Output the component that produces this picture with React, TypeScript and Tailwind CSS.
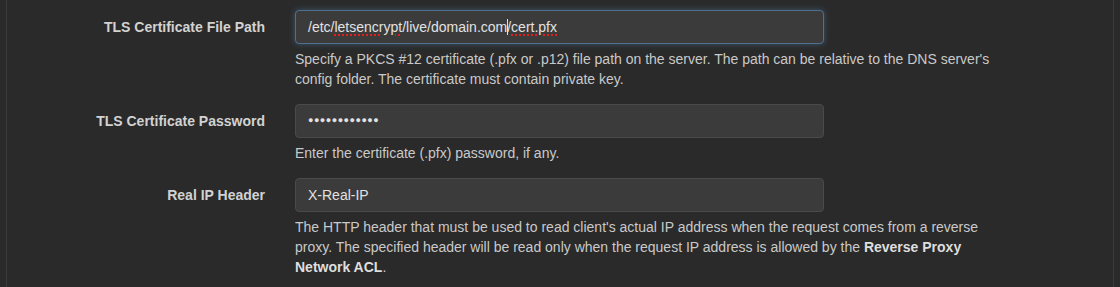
import React from "react";

const FONT = { fontFamily: '"Liberation Sans", Arial, sans-serif' };

function FormRow({
  label,
  children,
  help,
}: {
  label: string;
  children: React.ReactNode;
  help: React.ReactNode;
}) {
  return (
    <div className="flex">
      <label className="w-[258px] shrink-0 text-right font-bold text-[14px] leading-[20px] text-[#d2d2d2] pt-[7px]">
        {label}
      </label>
      <div className="ml-[30px]">
        {children}
        <p className="w-[706px] mt-[5px] text-[14px] leading-[20px] text-[#c9c9c9]">
          {help}
        </p>
      </div>
    </div>
  );
}

function Field({
  focused,
  children,
}: {
  focused?: boolean;
  children: React.ReactNode;
}) {
  return (
    <div
      className={
        "w-[529px] h-[34px] rounded-[4px] border bg-[#3b3b3b] px-[12px] flex items-center text-[14px] text-[#e2e2e2] " +
        (focused
          ? "border-[#4f6f8c] shadow-[0_0_6px_rgba(102,175,233,0.35)]"
          : "border-[#4a4a4a]")
      }
    >
      {children}
    </div>
  );
}

const squiggle =
  "underline decoration-dotted decoration-[#e0201e] decoration-[2px] underline-offset-[3px]";

export default function App() {
  return (
    <div style={FONT} className="h-[287px] overflow-hidden bg-[#2a2a2a]">
      <div className="mx-[6px] h-full border-x border-[#3c3c3c] pt-[10px]">
        <FormRow
          label="TLS Certificate File Path"
          help={
            <>
              Specify a PKCS #12 certificate (.pfx or .p12) file path on the
              server. The path can be relative to the DNS server's config
              folder. The certificate must contain private key.
            </>
          }
        >
          <Field focused>
            <span className="whitespace-pre">
              /etc/<span className={squiggle}>letsencrypt</span>/live/domain.com
              <span className="inline-block w-px h-[16px] bg-[#e2e2e2] align-[-3px] mr-[-1px]" />
              /<span className={squiggle}>cert.pfx</span>
            </span>
          </Field>
        </FormRow>

        <div className="h-[15px]" />

        <FormRow
          label="TLS Certificate Password"
          help={<>Enter the certificate (.pfx) password, if any.</>}
        >
          <Field>
            <span className="text-[9px] tracking-[0.5px]">●●●●●●●●●●●●</span>
          </Field>
        </FormRow>

        <div className="h-[15px]" />

        <FormRow
          label="Real IP Header"
          help={
            <>
              The HTTP header that must be used to read client's actual IP
              address when the request comes from a reverse proxy. The
              specified header will be read only when the request IP address is
              allowed by the{" "}
              <b className="text-[#dedede]">Reverse Proxy Network ACL</b>.
            </>
          }
        >
          <Field>X-Real-IP</Field>
        </FormRow>
      </div>
    </div>
  );
}
